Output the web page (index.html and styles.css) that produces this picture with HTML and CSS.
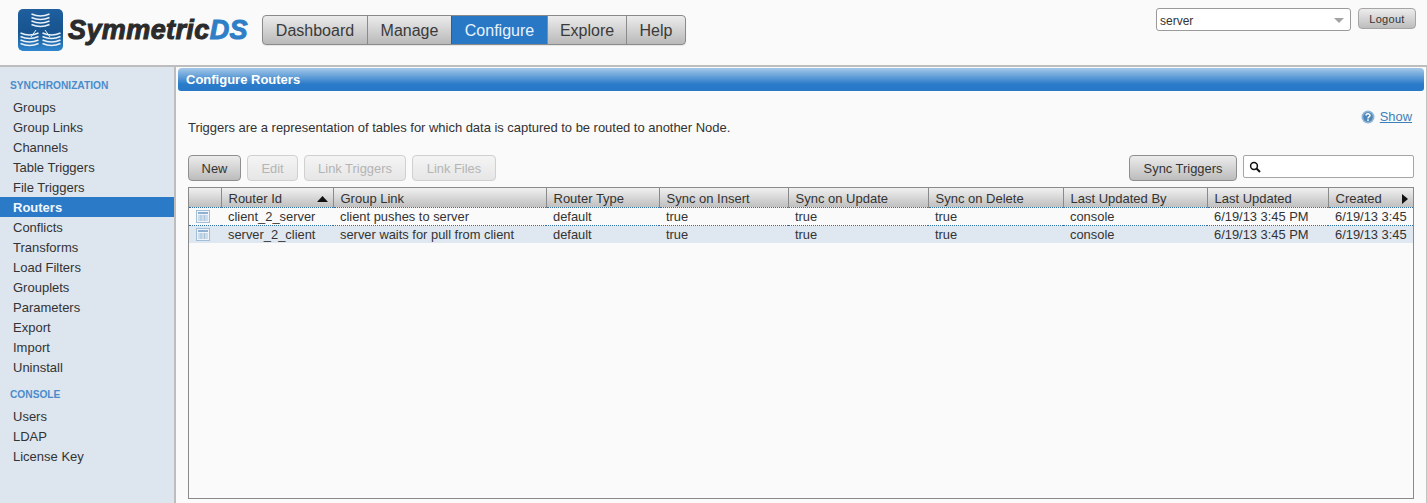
FILE: index.html
```html
<!DOCTYPE html>
<html lang="en">
<head>
<meta charset="utf-8">
<title>SymmetricDS - Configure Routers</title>
<link rel="stylesheet" href="styles.css">
</head>
<body>
<header class="topbar">
  <a class="logo" href="#">
    <svg class="logo-mark" width="45" height="42" viewBox="0 0 45 42" aria-hidden="true">
      <defs>
        <linearGradient id="lg" x1="0" y1="0" x2="0" y2="1">
          <stop offset="0" stop-color="#1f5f9e"/>
          <stop offset="0.55" stop-color="#17548f"/>
          <stop offset="1" stop-color="#2f86cf"/>
        </linearGradient>
        <g id="disk" fill="none" stroke="#e8f2fa" stroke-width="1.5">
          <path d="M-9 0q9 4 18 0"/>
          <path d="M-9 3.5q9 4 18 0"/>
          <path d="M-9 7q9 4 18 0"/>
          <path d="M-9 10.5q9 4 18 0"/>
        </g>
      </defs>
      <rect width="45" height="42" rx="5" fill="url(#lg)"/>
      <use href="#disk" x="22.5" y="5"/>
      <use href="#disk" x="11.5" y="24"/>
      <use href="#disk" x="33.5" y="24"/>
      <path d="M18 21l-5 7M27 21l5 7" stroke="#e8f2fa" stroke-width="1" fill="none"/>
    </svg>
    <span class="logo-text">Symmetric<span class="logo-ds">DS</span></span>
  </a>
  <nav class="mainnav">
    <a class="tab tab-dashboard" href="#">Dashboard</a>
    <a class="tab tab-manage" href="#">Manage</a>
    <a class="tab tab-configure is-active" href="#">Configure</a>
    <a class="tab tab-explore" href="#">Explore</a>
    <a class="tab tab-help" href="#">Help</a>
  </nav>
  <div class="session">
    <div class="nodeselect">
      <span>server</span>
      <svg class="caret" width="10" height="5" viewBox="0 0 10 5" aria-hidden="true"><path d="M0 0h10L5 5z" fill="#a3a3a3"/></svg>
    </div>
    <button class="logout" type="button">Logout</button>
  </div>
</header>
<div class="layout">
  <aside class="sidebar">
    <h2 class="side-title">SYNCHRONIZATION</h2>
    <ul class="side-list">
      <li><a href="#">Groups</a></li>
      <li><a href="#">Group Links</a></li>
      <li><a href="#">Channels</a></li>
      <li><a href="#">Table Triggers</a></li>
      <li><a href="#">File Triggers</a></li>
      <li class="is-current"><a href="#">Routers</a></li>
      <li><a href="#">Conflicts</a></li>
      <li><a href="#">Transforms</a></li>
      <li><a href="#">Load Filters</a></li>
      <li><a href="#">Grouplets</a></li>
      <li><a href="#">Parameters</a></li>
      <li><a href="#">Export</a></li>
      <li><a href="#">Import</a></li>
      <li><a href="#">Uninstall</a></li>
    </ul>
    <h2 class="side-title">CONSOLE</h2>
    <ul class="side-list">
      <li><a href="#">Users</a></li>
      <li><a href="#">LDAP</a></li>
      <li><a href="#">License Key</a></li>
    </ul>
  </aside>
  <main class="main">
    <h1 class="panel-title">Configure Routers</h1>
    <div class="content">
      <div class="intro">
        <p class="intro-text">Triggers are a representation of tables for which data is captured to be routed to another Node.</p>
        <a class="show" href="#">
          <svg width="14" height="14" viewBox="0 0 14 14" aria-hidden="true">
            <circle cx="7" cy="7" r="6.5" fill="#8fb6d8"/>
            <circle cx="7" cy="7" r="4.8" fill="#4f86b8"/>
            <path d="M5 5.6C5 3.3 9 3.3 9 5.5 9 7 7 6.8 7 8.4" fill="none" stroke="#fff" stroke-width="1.5"/>
            <rect x="6.2" y="9.3" width="1.6" height="1.6" fill="#fff"/>
          </svg>
          <span>Show</span>
        </a>
      </div>
      <div class="toolbar">
        <button class="btn btn-new" type="button">New</button>
        <button class="btn btn-edit" type="button" disabled>Edit</button>
        <button class="btn btn-link-t" type="button" disabled>Link Triggers</button>
        <button class="btn btn-link-f" type="button" disabled>Link Files</button>
        <button class="btn btn-sync" type="button">Sync Triggers</button>
        <div class="search">
          <svg width="12" height="12" viewBox="0 0 12 12" aria-hidden="true">
            <circle cx="5" cy="5" r="3.4" fill="none" stroke="#111" stroke-width="1.5"/>
            <path d="M7.5 7.5l3.5 3.5" stroke="#111" stroke-width="2"/>
          </svg>
        </div>
      </div>
      <div class="grid-wrap">
        <table class="grid">
          <colgroup>
            <col class="c-icon"><col class="c-id"><col class="c-link"><col class="c-type"><col class="c-ins"><col class="c-upd"><col class="c-del"><col class="c-by"><col class="c-last"><col class="c-created">
          </colgroup>
          <thead>
            <tr>
              <th></th>
              <th><span class="th-inner">Router Id<svg width="11" height="6" viewBox="0 0 11 6" aria-hidden="true"><path d="M0 6h11L5.500 0z" fill="#111"/></svg></span></th>
              <th>Group Link</th>
              <th>Router Type</th>
              <th>Sync on Insert</th>
              <th>Sync on Update</th>
              <th>Sync on Delete</th>
              <th>Last Updated By</th>
              <th>Last Updated</th>
              <th><span class="th-inner">Created<svg class="more" width="6" height="10" viewBox="0 0 6 10" aria-hidden="true"><path d="M0 0v10l6-5z" fill="#111"/></svg></span></th>
            </tr>
          </thead>
          <tbody>
            <tr>
              <td class="icon-cell"><svg width="14" height="13" viewBox="0 0 14 13" aria-hidden="true"><use href="#rowicon"/></svg></td>
              <td>client_2_server</td><td>client pushes to server</td><td>default</td><td>true</td><td>true</td><td>true</td><td>console</td><td>6/19/13 3:45 PM</td><td>6/19/13 3:45</td>
            </tr>
            <tr class="alt">
              <td class="icon-cell"><svg width="14" height="13" viewBox="0 0 14 13" aria-hidden="true"><use href="#rowicon"/></svg></td>
              <td>server_2_client</td><td>server waits for pull from client</td><td>default</td><td>true</td><td>true</td><td>true</td><td>console</td><td>6/19/13 3:45 PM</td><td>6/19/13 3:45</td>
            </tr>
          </tbody>
        </table>
      </div>
    </div>
  </main>
</div>
<svg class="sprite" width="0" height="0" aria-hidden="true">
  <defs>
    <g id="rowicon">
      <rect x="0.500" y="0.500" width="13" height="12" fill="#eef4f9" stroke="#a3bfd8"/>
      <rect x="2" y="2" width="10" height="2" fill="#8fb0cf"/>
      <path d="M2 6h10M2 8h10M2 10h10M5 5v6M8.500 5v6" stroke="#a9c3da" stroke-width="1" fill="none"/>
    </g>
  </defs>
</svg>
</body>
</html>
```
FILE: styles.css
```css
* { box-sizing: border-box; }
html, body { height: 100%; margin: 0; }
body {
  display: flex;
  flex-direction: column;
  height: 503px;
  overflow: hidden;
  background: #fafafa;
  color: #333;
  font: 12.9px/16px "Liberation Sans", Arial, sans-serif;
}
a { color: inherit; text-decoration: none; }
.sprite { position: absolute; }

/* header */
.topbar {
  flex: none;
  display: flex;
  align-items: flex-start;
  height: 67px;
  padding: 9px 11px 0 18px;
  border-bottom: 2px solid #bdbdbd;
}
.logo { display: flex; align-items: center; width: 244px; height: 42px; }
.logo-mark { flex: none; }
.logo-text {
  margin-left: 5px;
  color: #2b2b2b;
  font: italic 700 27px/36px "Liberation Sans", sans-serif;
  letter-spacing: 0.4px;
  -webkit-text-stroke: 1px currentColor;
}
.logo-ds { color: #2f7fc7; }
.mainnav {
  display: flex;
  height: 30px;
  margin-top: 6px;
  border: 1px solid #8a8a8a;
  border-radius: 4px;
  background: linear-gradient(#ececec, #b9b9b9);
  box-shadow: 0 1px 1px rgba(0,0,0,.08);
  overflow: hidden;
}
.tab {
  display: flex;
  align-items: center;
  justify-content: center;
  padding-top: 1px;
  font-size: 16px;
  color: #3a3a3a;
  border-left: 1px solid #8a8a8a;
}
.tab:first-child { border-left: 0; }
.tab-dashboard { width: 104px; }
.tab-manage { width: 84px; }
.tab-configure { width: 96px; }
.tab-explore { width: 79px; }
.tab-help { width: 59px; }
.is-active { background: #2878c6; color: #e8f2fb; border-left-color: #24639f; }
.session { display: flex; gap: 7px; margin-left: auto; margin-top: -1px; }
.nodeselect {
  display: flex;
  align-items: center;
  justify-content: space-between;
  width: 195px;
  height: 23px;
  padding: 2px 6px 0 3px;
  background: #fff;
  border: 1px solid #9a9a9a;
  border-radius: 3px;
  font-size: 12px;
}
.logout {
  width: 58px;
  height: 21px;
  padding: 0;
  border: 1px solid #a5a5a5;
  border-radius: 4px;
  background: linear-gradient(#ececec, #bdbdbd);
  color: #333;
  font: 11px/16px "Liberation Sans", sans-serif;
  letter-spacing: 0.3px;
}

/* body layout */
.layout { flex: 1; display: flex; min-height: 0; }
.sidebar {
  flex: none;
  width: 176px;
  padding-top: 10px;
  background: #dde5ef;
  border-right: 2px solid #bdbdbd;
}
.side-title {
  height: 16px;
  margin: 0 0 4px;
  padding-left: 10px;
  color: #4a8ccb;
  font: 700 10.2px/18px "Liberation Sans", sans-serif;
}
.side-list { margin: 0 0 9px; padding: 0; list-style: none; }
.side-list li { height: 20px; font-size: 13px; line-height: 22px; padding-left: 13px; }
.side-list .is-current {
  background: #2a7ac8;
  color: #f2f7fc;
  font-weight: 700;
}

/* main */
.main {
  flex: 1;
  display: flex;
  flex-direction: column;
  min-width: 0;
  padding: 1px 2px 4px 2px;
  border-right: 1px solid #c4c4c4;
}
.panel-title {
  flex: none;
  height: 23px;
  margin: 0;
  padding-left: 8px;
  border-radius: 4px 4px 3px 3px;
  background: linear-gradient(#a4c8e8, #2a7bc9 70%, #2778c6);
  color: #fff;
  font: 700 13px/24px "Liberation Sans", sans-serif;
}
.content {
  flex: 1;
  display: flex;
  flex-direction: column;
  min-height: 0;
  padding: 0 10px;
}
.intro {
  flex: none;
  display: flex;
  justify-content: space-between;
  height: 28px;
  margin: 17px 0 19px;
}
.intro-text { align-self: flex-end; margin: 0; font-size: 13px; letter-spacing: -0.03px; }
.show { display: flex; align-items: center; gap: 5px; height: 16px; margin-top: 1px; padding-right: 2px; color: #3f7fb8; }
.show span { text-decoration: underline; }

.toolbar { flex: none; display: flex; align-items: flex-start; gap: 6px; height: 26px; margin-bottom: 6px; }
.btn {
  height: 26px;
  padding: 1px 0 0;
  border: 1px solid #8f8f8f;
  border-radius: 4px;
  background: linear-gradient(#ececec, #bcbcbc);
  color: #333;
  font: 12.9px/16px "Liberation Sans", sans-serif;
}
.btn:disabled {
  border-color: #d0d0d0;
  background: linear-gradient(#f4f4f4, #e6e6e6);
  color: #b4b4b4;
}
.btn-new { width: 53px; }
.btn-edit { width: 51px; }
.btn-link-t { width: 102px; }
.btn-link-f { width: 84px; }
.btn-sync { width: 108px; margin-left: auto; }
.search {
  display: flex;
  align-items: center;
  width: 171px;
  height: 23px;
  padding: 0 5px;
  background: #fff;
  border: 1px solid #a5a5a5;
  border-radius: 2px;
}

/* grid */
.grid-wrap { flex: 1; min-height: 0; background: #fafafa; border: 1px solid #8a8a8a; overflow: hidden; }
.grid { width: 1224px; table-layout: fixed; border-collapse: collapse; }
.c-icon { width: 32px; }
.c-id { width: 112px; }
.c-link { width: 213px; }
.c-type { width: 113px; }
.c-ins { width: 129px; }
.c-upd { width: 140px; }
.c-del { width: 135px; }
.c-by { width: 144px; }
.c-last { width: 121px; }
.c-created { width: 85px; }
.grid th {
  height: 19px;
  padding: 2px 5px 0 7px;
  background: linear-gradient(#f0f0f0, #bfbfbf);
  border-left: 1px solid #8a8a8a;
  border-bottom: 1px dotted #2d6ea8;
  font-size: 13px;
  font-weight: 400;
  line-height: 17px;
  text-align: left;
  white-space: nowrap;
}
.grid th:first-child { border-left: 0; }
.th-inner { display: flex; align-items: center; justify-content: space-between; }
.th-inner .more { margin-right: 0; }
.grid td {
  height: 17px;
  padding: 0 0 0 7px;
  border-bottom: 1px dotted #2d6ea8;
  line-height: 17px;
  white-space: nowrap;
  overflow: hidden;
}
.grid .alt td { height: 17px; background: #dfe7f0; border-bottom: 0; }
.grid .icon-cell { padding: 0 0 0 7px; line-height: 0; }
.grid .icon-cell svg { display: block; }
```
